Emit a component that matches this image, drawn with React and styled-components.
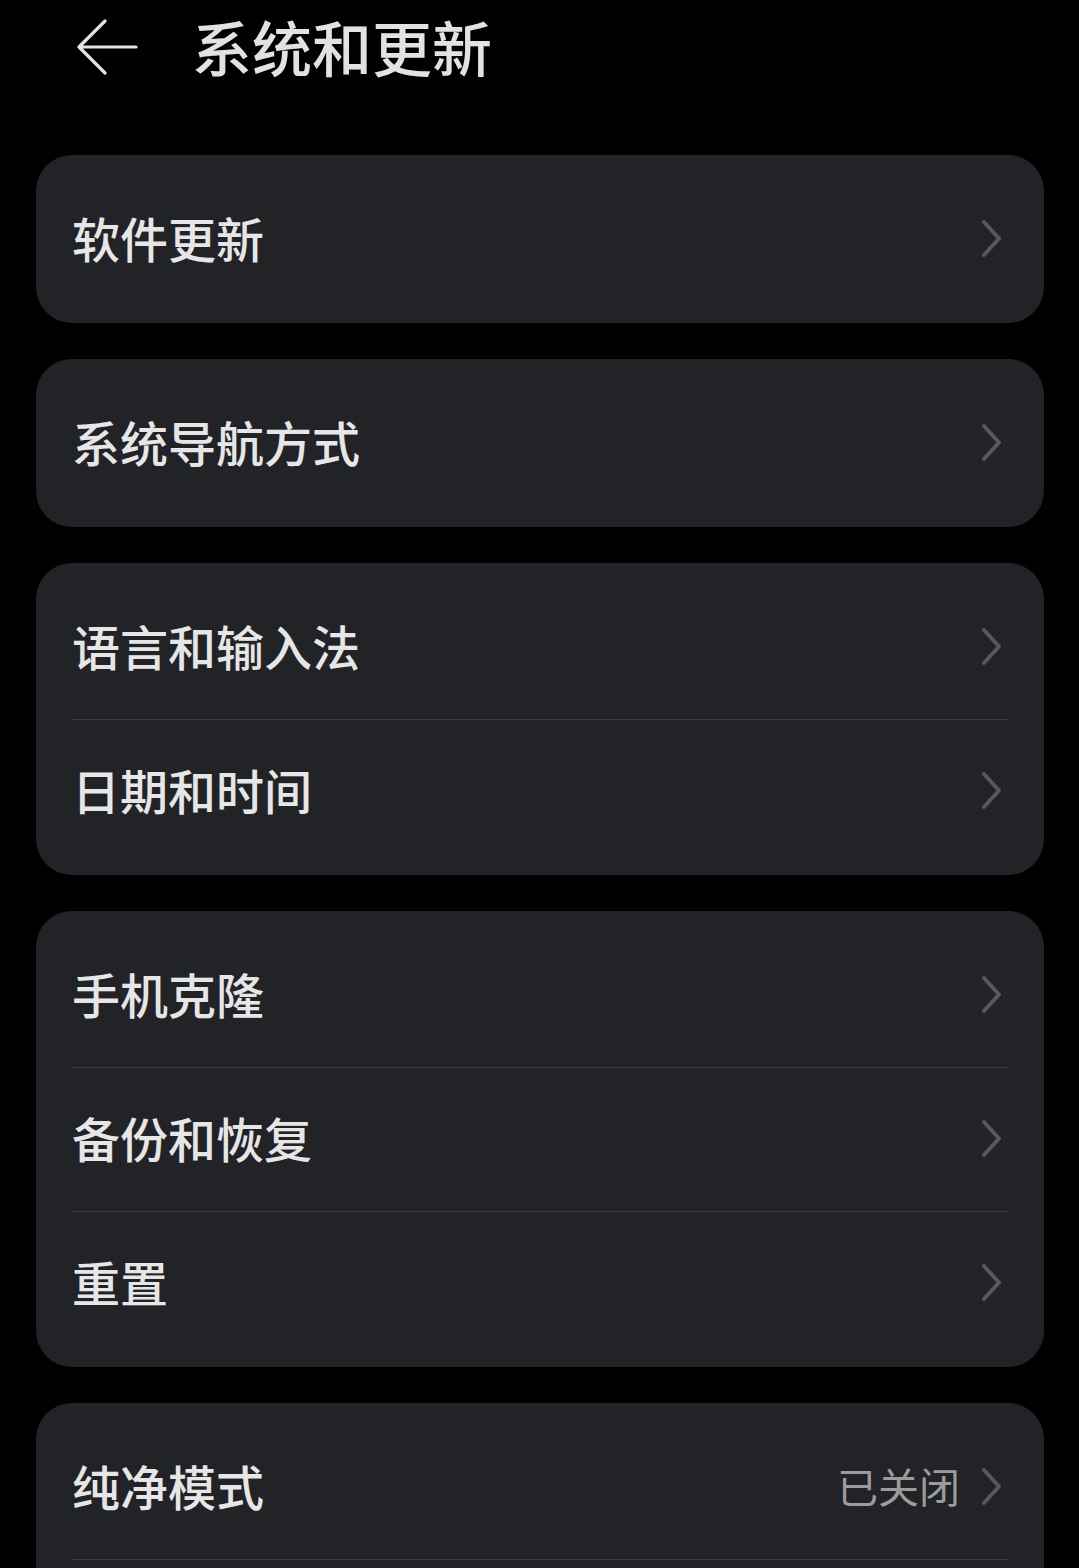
import React from "react";
import styled, { createGlobalStyle } from "styled-components";

const GlobalStyle = createGlobalStyle`
  html, body {
    margin: 0;
    padding: 0;
    background: #000;
    overflow: hidden;
  }
  body {
    font-family: "Noto Sans CJK SC", "Noto Sans", sans-serif;
    -webkit-font-smoothing: antialiased;
  }
`;

const Page = styled.div`
  width: 1079px;
  height: 1568px;
  overflow: hidden;
  background: #000;
`;

const Header = styled.header`
  display: flex;
  align-items: center;
  height: 98px;
  padding-left: 76px;
`;

const BackButton = styled.button`
  display: flex;
  align-items: center;
  justify-content: center;
  width: 64px;
  height: 60px;
  padding: 0;
  border: none;
  background: none;
  cursor: pointer;
`;

const Title = styled.h1`
  margin: 0 0 6px 52px;
  font-size: 60px;
  font-weight: 500;
  color: #e2e2e2;
  line-height: 1;
`;

const List = styled.div`
  display: flex;
  flex-direction: column;
  gap: 36px;
  padding: 57px 35px 0 36px;
`;

const Card = styled.section`
  background: #222326;
  border-radius: 36px;
  padding: 12px 0;
`;

const Row = styled.div`
  display: flex;
  align-items: center;
  height: 144px;
  padding: 0 36px;
  cursor: pointer;
`;

const Label = styled.span`
  flex: 1;
  font-size: 48px;
  font-weight: 500;
  color: #e6e6e6;
  line-height: 1;
  padding-bottom: 5px;
`;

const Value = styled.span`
  font-size: 41px;
  color: #9c9c9d;
  margin-right: 20px;
  line-height: 1;
  padding-bottom: 4px;
`;

const Divider = styled.div`
  height: 1px;
  margin: 0 36px -1px;
  background: #3b3c3f;
`;

const Chevron = () => (
  <svg width="28" height="44" viewBox="0 0 28 44">
    <path
      d="M4 5 L19 21.5 L4 38"
      fill="none"
      stroke="#58595c"
      strokeWidth="4"
      strokeLinecap="round"
      strokeLinejoin="round"
    />
  </svg>
);

// the last card runs past the bottom of the screen; its second row is off view
const groups = [
  [{ label: "软件更新" }],
  [{ label: "系统导航方式" }],
  [{ label: "语言和输入法" }, { label: "日期和时间" }],
  [{ label: "手机克隆" }, { label: "备份和恢复" }, { label: "重置" }],
  [{ label: "纯净模式", value: "已关闭" }, { label: "" }],
];

const App = () => {
  return (
    <Page>
      <GlobalStyle />
      <Header>
        <BackButton aria-label="返回">
          <svg width="64" height="60" viewBox="0 0 64 60">
            <path
              d="M3 28 L60 28 M29 2 L3 28 L29 54"
              fill="none"
              stroke="#e2e2e2"
              strokeWidth="3.2"
              strokeLinecap="round"
              strokeLinejoin="round"
            />
          </svg>
        </BackButton>
        <Title>系统和更新</Title>
      </Header>
      <List>
        {groups.map((items, gi) => (
          <Card key={gi}>
            {items.map((item, i) => (
              <React.Fragment key={i}>
                {i > 0 && <Divider />}
                <Row>
                  <Label>{item.label}</Label>
                  {item.value && <Value>{item.value}</Value>}
                  <Chevron />
                </Row>
              </React.Fragment>
            ))}
          </Card>
        ))}
      </List>
    </Page>
  );
};

export default App;
